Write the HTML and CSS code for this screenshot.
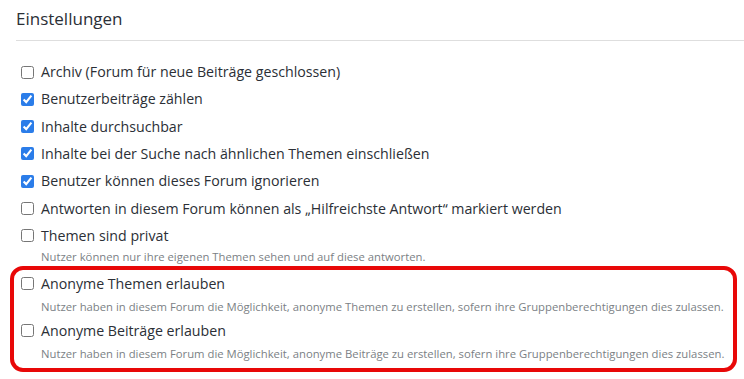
FILE: index.html
```html
<!DOCTYPE html>
<html lang="de">
<head>
<meta charset="utf-8">
<title>Einstellungen</title>
<link rel="stylesheet" href="styles.css">
</head>
<body>
<section class="settings">
  <h2 class="settings-title">Einstellungen</h2>
  <div class="options">
    <label class="option"><input type="checkbox"><span>Archiv (Forum für neue Beiträge geschlossen)</span></label>
    <label class="option"><input type="checkbox" checked><span>Benutzerbeiträge zählen</span></label>
    <label class="option"><input type="checkbox" checked><span>Inhalte durchsuchbar</span></label>
    <label class="option"><input type="checkbox" checked><span>Inhalte bei der Suche nach ähnlichen Themen einschließen</span></label>
    <label class="option"><input type="checkbox" checked><span>Benutzer können dieses Forum ignorieren</span></label>
    <label class="option"><input type="checkbox"><span>Antworten in diesem Forum können als „Hilfreichste Antwort“ markiert werden</span></label>
    <div class="option-group">
      <label class="option"><input type="checkbox"><span>Themen sind privat</span></label>
      <p class="hint">Nutzer können nur ihre eigenen Themen sehen und auf diese antworten.</p>
    </div>
    <div class="highlight">
      <div class="option-group">
        <label class="option"><input type="checkbox"><span>Anonyme Themen erlauben</span></label>
        <p class="hint">Nutzer haben in diesem Forum die Möglichkeit, anonyme Themen zu erstellen, sofern ihre Gruppenberechtigungen dies zulassen.</p>
      </div>
      <div class="option-group">
        <label class="option"><input type="checkbox"><span>Anonyme Beiträge erlauben</span></label>
        <p class="hint">Nutzer haben in diesem Forum die Möglichkeit, anonyme Beiträge zu erstellen, sofern ihre Gruppenberechtigungen dies zulassen.</p>
      </div>
    </div>
  </div>
</section>
</body>
</html>
```

FILE: styles.css
```css
html, body {
  margin: 0;
  padding: 0;
  background: #ffffff;
}

body {
  font-family: "Open Sans", "Noto Sans", sans-serif;
  color: #2b2f36;
}

.settings {
  padding: 0 7px 0 16px;
}

.settings-title {
  margin: 0 -7px 0 0;
  padding: 8px 0 11px;
  font-size: 17px;
  line-height: 21px;
  font-weight: 400;
  color: #2b2f36;
  border-bottom: 1px solid #dedede;
}

.options {
  display: flex;
  flex-direction: column;
  padding-top: 21px;
}

.option {
  display: flex;
  align-items: center;
  gap: 7px;
  height: 20px;
  margin-bottom: 7.33px;
  font-size: 14.2px;
  line-height: 20px;
  color: #2b2f36;
}

.option input {
  margin: 0 0 0 5px;
  width: 13px;
  height: 13px;
  accent-color: #2b7de9;
}

.option-group .option {
  margin-bottom: 3px;
}

.hint {
  margin: 0 0 0 25px;
  font-size: 11.3px;
  line-height: 16px;
  color: #7b7f85;
}

.highlight {
  margin: 1px 0 0 -6px;
  padding: 4px 0 6px 2px;
  border: 4px solid #e80808;
  border-radius: 13px;
  display: flex;
  flex-direction: column;
  gap: 6px;
}

.highlight .option-group .option {
  margin-bottom: 5px;
}
```
